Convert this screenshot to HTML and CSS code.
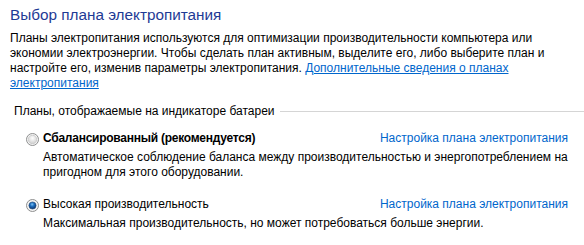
FILE: index.html
```html
<!DOCTYPE html>
<html lang="ru">
<head>
<meta charset="utf-8">
<link rel="stylesheet" href="styles.css">
</head>
<body>
<div class="page">
  <h1 class="title">Выбор плана электропитания</h1>
  <p class="intro">Планы электропитания используются для оптимизации производительности компьютера или<br>экономии электроэнергии. Чтобы сделать план активным, выделите его, либо выберите план и<br>настройте его, изменив параметры электропитания. <a class="link" href="#">Дополнительные сведения о планах<br>электропитания</a></p>

  <div class="group-head">
    <span class="group-label">Планы, отображаемые на индикаторе батареи</span>
    <span class="group-rule"></span>
  </div>

  <div class="plan plan-first">
    <div class="plan-row">
      <label class="plan-name plan-bold">
        <svg class="radio" width="13" height="13" viewBox="0 0 13 13">
          <defs>
            <radialGradient id="g1" cx="50%" cy="35%" r="65%">
              <stop offset="0" stop-color="#ffffff"/>
              <stop offset="1" stop-color="#cfcfcf"/>
            </radialGradient>
          </defs>
          <circle cx="6.5" cy="6.5" r="6" fill="#f4f4f4" stroke="#8e8f8f"/>
          <circle cx="6.5" cy="6.5" r="4.2" fill="url(#g1)" stroke="#c9c9c9" stroke-width="0.8"/>
        </svg>
        <span class="bold-text">Сбалансированный (рекомендуется)</span>
      </label>
      <a class="plan-link" href="#">Настройка плана электропитания</a>
    </div>
    <div class="plan-desc">Автоматическое соблюдение баланса между производительностью и энергопотреблением на<br>пригодном для этого оборудовании.</div>
  </div>

  <div class="plan plan-second">
    <div class="plan-row">
      <label class="plan-name">
        <svg class="radio" width="13" height="13" viewBox="0 0 13 13">
          <defs>
            <radialGradient id="g2" cx="45%" cy="35%" r="60%">
              <stop offset="0" stop-color="#7fc3f5"/>
              <stop offset="0.45" stop-color="#1d6fc0"/>
              <stop offset="1" stop-color="#0d3a78"/>
            </radialGradient>
          </defs>
          <circle cx="6.5" cy="6.5" r="6" fill="#f4f4f4" stroke="#8e8f8f"/>
          <circle cx="6.5" cy="6.5" r="3.6" fill="url(#g2)" stroke="#2a4e7a" stroke-width="0.6"/>
        </svg>
        Высокая производительность
      </label>
      <a class="plan-link" href="#">Настройка плана электропитания</a>
    </div>
    <div class="plan-desc">Максимальная производительность, но может потребоваться больше энергии.</div>
  </div>
</div>
</body>
</html>
```
FILE: styles.css
```css
html, body {
  margin: 0;
  padding: 0;
  background: #ffffff;
}

body {
  font-family: "Liberation Sans", Arial, sans-serif;
  font-size: 12px;
  line-height: 15px;
  color: #000000;
}

.page {
  padding: 5px 0 0 10px;
}

.title {
  margin: 0;
  font-size: 15.3px;
  line-height: 20px;
  font-weight: normal;
  color: #1e3a95;
}

.intro {
  margin: 6px 0 0 0;
  white-space: nowrap;
}

.link {
  color: #0066cc;
  text-decoration: underline;
}

.group-head {
  display: flex;
  align-items: center;
  gap: 5px;
  margin: 13px 0 0 4px;
}

.group-label {
  white-space: nowrap;
}

.group-rule {
  flex: 1;
  height: 1px;
  background: #d5d5d5;
}

.plan {
  padding: 0 16px 0 16px;
}

.plan-first {
  margin-top: 12px;
}

.plan-second {
  margin-top: 17px;
}

.plan-row {
  display: flex;
  justify-content: space-between;
  align-items: center;
}

.plan-name {
  display: flex;
  align-items: center;
  gap: 4px;
  white-space: nowrap;
}

.plan-bold {
  font-weight: bold;
}

.bold-text {
  letter-spacing: -0.25px;
}

.radio {
  flex: none;
  position: relative;
  top: 1px;
}

.plan-link {
  color: #0066cc;
  text-decoration: none;
  white-space: nowrap;
}

.plan-desc {
  margin: 4px 0 0 17px;
  white-space: nowrap;
}
```
